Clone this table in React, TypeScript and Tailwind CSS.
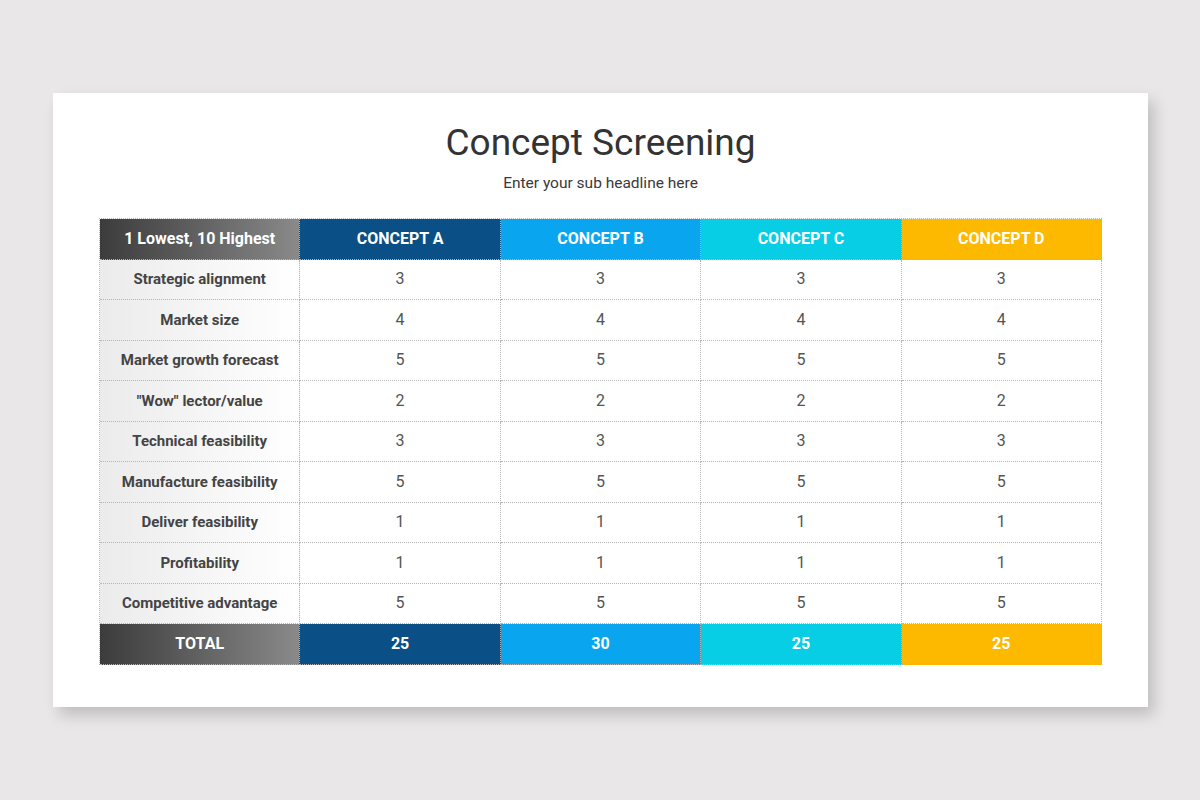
const concepts = [
  { name: "CONCEPT A", bg: "bg-[#0a4f85]", total: 25 },
  { name: "CONCEPT B", bg: "bg-[#09a6ef]", total: 30 },
  { name: "CONCEPT C", bg: "bg-[#07cde5]", total: 25 },
  { name: "CONCEPT D", bg: "bg-[#fdb900]", total: 25 },
];

const rows: [string, number][] = [
  ["Strategic alignment", 3],
  ["Market size", 4],
  ["Market growth forecast", 5],
  ['"Wow" lector/value', 2],
  ["Technical feasibility", 3],
  ["Manufacture feasibility", 5],
  ["Deliver feasibility", 1],
  ["Profitability", 1],
  ["Competitive advantage", 5],
];

const cell =
  "h-[40.5px] flex items-center justify-center border-r border-b border-dotted border-[#b5b5b5]";

export default function App() {
  return (
    <div
      className="w-[1200px] h-[800px] bg-[#e9e7e8] pt-[93px] pl-[53px]"
      style={{ fontFamily: "Roboto, 'Liberation Sans', sans-serif" }}
    >
      <div className="w-[1095px] h-[614px] bg-white shadow-[6px_8px_14px_rgba(0,0,0,0.18)] flex flex-col items-center pt-[28px]">
        <h1 className="text-[37px] leading-[44px] text-[#333333]">Concept Screening</h1>
        <p className="mt-[8px] text-[15.5px] leading-[20px] text-[#3a3a3a]">Enter your sub headline here</p>
        <div className="mt-[25px] w-[1003px] grid grid-cols-5 border-l border-t border-dotted border-[#b5b5b5]">
          <div className={`${cell} bg-gradient-to-r from-[#3c3c3c] to-[#8a8a8a] text-white font-bold text-[16px]`}>
            1 Lowest, 10 Highest
          </div>
          {concepts.map((c) => (
            <div key={c.name} className={`${cell} ${c.bg} text-white font-bold text-[16px]`}>
              {c.name}
            </div>
          ))}
          {rows.map(([label, v]) => (
            <>
              <div
                key={label}
                className={`${cell} bg-gradient-to-r from-[#ebebeb] to-white text-[#444444] font-bold text-[15px]`}
              >
                {label}
              </div>
              {concepts.map((c) => (
                <div key={label + c.name} className={`${cell} text-[#555555] text-[16px]`}>
                  {v}
                </div>
              ))}
            </>
          ))}
          <div className={`${cell} bg-gradient-to-r from-[#3c3c3c] to-[#8a8a8a] text-white font-bold text-[16px]`}>
            TOTAL
          </div>
          {concepts.map((c) => (
            <div key={"t" + c.name} className={`${cell} ${c.bg} text-white font-bold text-[16px]`}>
              {c.total}
            </div>
          ))}
        </div>
      </div>
    </div>
  );
}
